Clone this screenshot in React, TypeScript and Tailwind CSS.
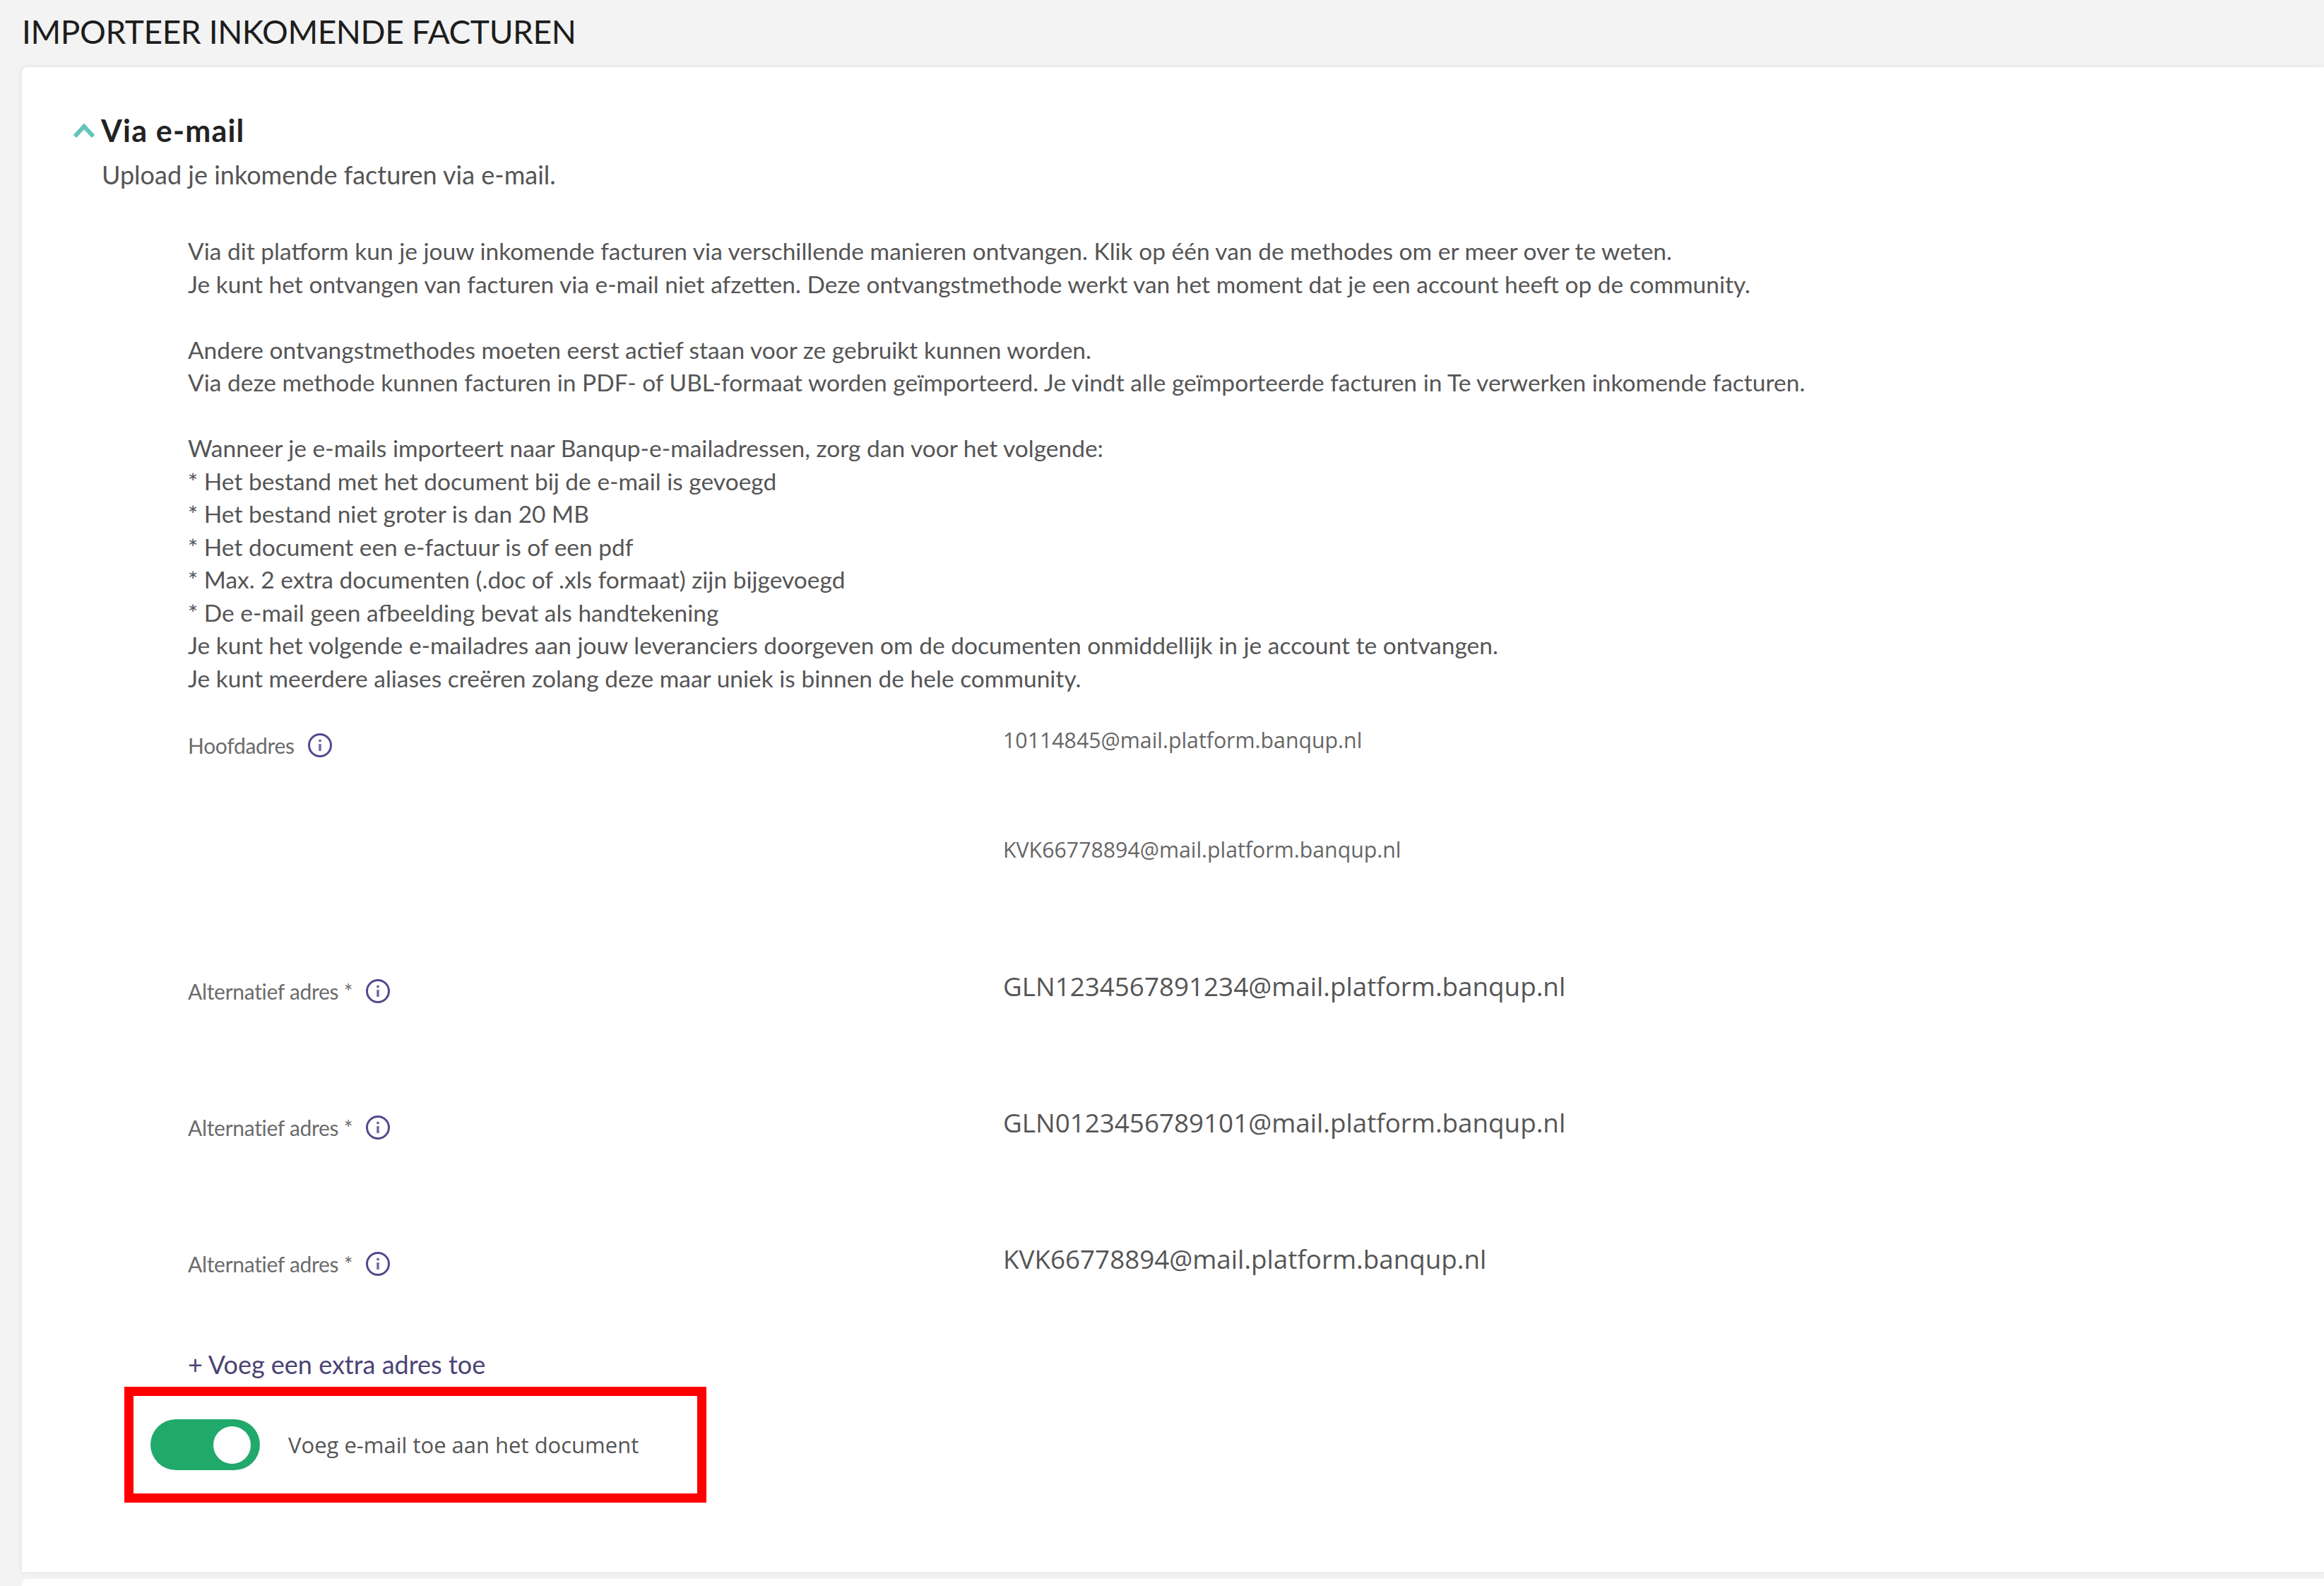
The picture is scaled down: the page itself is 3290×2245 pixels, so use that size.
const lato = "font-['Lato','Liberation_Sans',sans-serif]";

const intro = [
  "Via dit platform kun je jouw inkomende facturen via verschillende manieren ontvangen. Klik op één van de methodes om er meer over te weten.",
  "Je kunt het ontvangen van facturen via e-mail niet afzetten. Deze ontvangstmethode werkt van het moment dat je een account heeft op de community.",
  "",
  "Andere ontvangstmethodes moeten eerst actief staan voor ze gebruikt kunnen worden.",
  "Via deze methode kunnen facturen in PDF- of UBL-formaat worden geïmporteerd. Je vindt alle geïmporteerde facturen in Te verwerken inkomende facturen.",
  "",
  "Wanneer je e-mails importeert naar Banqup-e-mailadressen, zorg dan voor het volgende:",
  "* Het bestand met het document bij de e-mail is gevoegd",
  "* Het bestand niet groter is dan 20 MB",
  "* Het document een e-factuur is of een pdf",
  "* Max. 2 extra documenten (.doc of .xls formaat) zijn bijgevoegd",
  "* De e-mail geen afbeelding bevat als handtekening",
  "Je kunt het volgende e-mailadres aan jouw leveranciers doorgeven om de documenten onmiddellijk in je account te ontvangen.",
  "Je kunt meerdere aliases creëren zolang deze maar uniek is binnen de hele community.",
];

function InfoIcon() {
  return (
    <svg viewBox="0 0 36 36" className="w-[36px] h-[36px] shrink-0" fill="none">
      <circle cx="18" cy="18" r="15.5" stroke="#4f4a8c" strokeWidth="3" />
      <circle cx="18" cy="11.5" r="2" fill="#6f6ba0" />
      <path d="M18 16v10" stroke="#6f6ba0" strokeWidth="3.5" />
    </svg>
  );
}

function AddressRow({ label, value, big, height }: { label?: string; value: string; big?: boolean; height: string }) {
  return (
    <div className={`grid grid-cols-[1154px_1fr] ${height}`}>
      {label ? (
        <div className="flex items-center gap-[18px] h-[36px] mt-[17px]">
          <span className={`${lato} text-[30px] text-[#6b6b6b] tracking-[-0.3px]`}>{label}</span>
          <InfoIcon />
        </div>
      ) : (
        <div />
      )}
      <div
        className={
          big
            ? "font-['Open_Sans',sans-serif] text-[36.8px] leading-[50px] mt-[3px] text-[#555]"
            : "font-['Open_Sans',sans-serif] text-[30.3px] leading-[40px] mt-[8px] text-[#666]"
        }
      >
        {value}
      </div>
    </div>
  );
}

export default function App() {
  return (
    <div className={`${lato} w-[3290px] h-[2245px] overflow-hidden bg-[#f3f3f3]`}>
      <h1 className="h-[95px] pl-[31px] pt-[16px] text-[46px] leading-[58px] text-[#1d1d1d] tracking-[-0.4px]">
        IMPORTEER INKOMENDE FACTUREN
      </h1>
      <div className="ml-[31px] h-[2130px] rounded-tl-[8px] bg-white shadow-[0_0_8px_rgba(0,0,0,0.08)]">
        <div className="flex items-center gap-[8px] pl-[72px] pt-[60px] h-[120px]">
          <svg viewBox="0 0 32 22" className="w-[32px] h-[22px]" fill="none">
            <path d="M3 19 16 5l13 14" stroke="#63c4b8" strokeWidth="6" />
          </svg>
          <span className="text-[43px] leading-[50px] font-bold text-[#222] tracking-[1.2px]">Via e-mail</span>
        </div>
        <p className="pl-[113px] pt-[7px] text-[36px] leading-[50px] text-[#555]">
          Upload je inkomende facturen via e-mail.
        </p>
        <div className="pl-[235px] pt-[60px]">
          <div className="text-[33.5px] leading-[46.5px] text-[#555]">
            {intro.map((line, i) => (
              <div key={i} className="h-[46.5px] whitespace-nowrap">
                {line}
              </div>
            ))}
          </div>
          <div className="pt-[37px]">
            <AddressRow label="Hoofdadres" value="10114845@mail.platform.banqup.nl" height="h-[155px]" />
            <AddressRow value="KVK66778894@mail.platform.banqup.nl" height="h-[193px]" />
            <AddressRow label="Alternatief adres *" value="GLN1234567891234@mail.platform.banqup.nl" big height="h-[193px]" />
            <AddressRow label="Alternatief adres *" value="GLN0123456789101@mail.platform.banqup.nl" big height="h-[193px]" />
            <AddressRow label="Alternatief adres *" value="KVK66778894@mail.platform.banqup.nl" big height="h-[152px]" />
          </div>
          <div className="text-[36px] leading-[50px] text-[#4a4475]">+ Voeg een extra adres toe</div>
        </div>
        <div className="ml-[145px] mt-[7px] w-[824px] h-[164px] border-[13px] border-[#ff0000] flex items-center pl-[24px] gap-[40px]">
          <div className="w-[155px] h-[72px] rounded-full bg-[#20a96b] flex items-center justify-end pr-[13px]">
            <div className="w-[53px] h-[53px] rounded-full bg-white" />
          </div>
          <span className="font-['Open_Sans',sans-serif] text-[31px] text-[#555]">Voeg e-mail toe aan het document</span>
        </div>
      </div>
      <div className="ml-[31px] mt-[10px] h-[20px] rounded-tl-[8px] bg-white" />
    </div>
  );
}
